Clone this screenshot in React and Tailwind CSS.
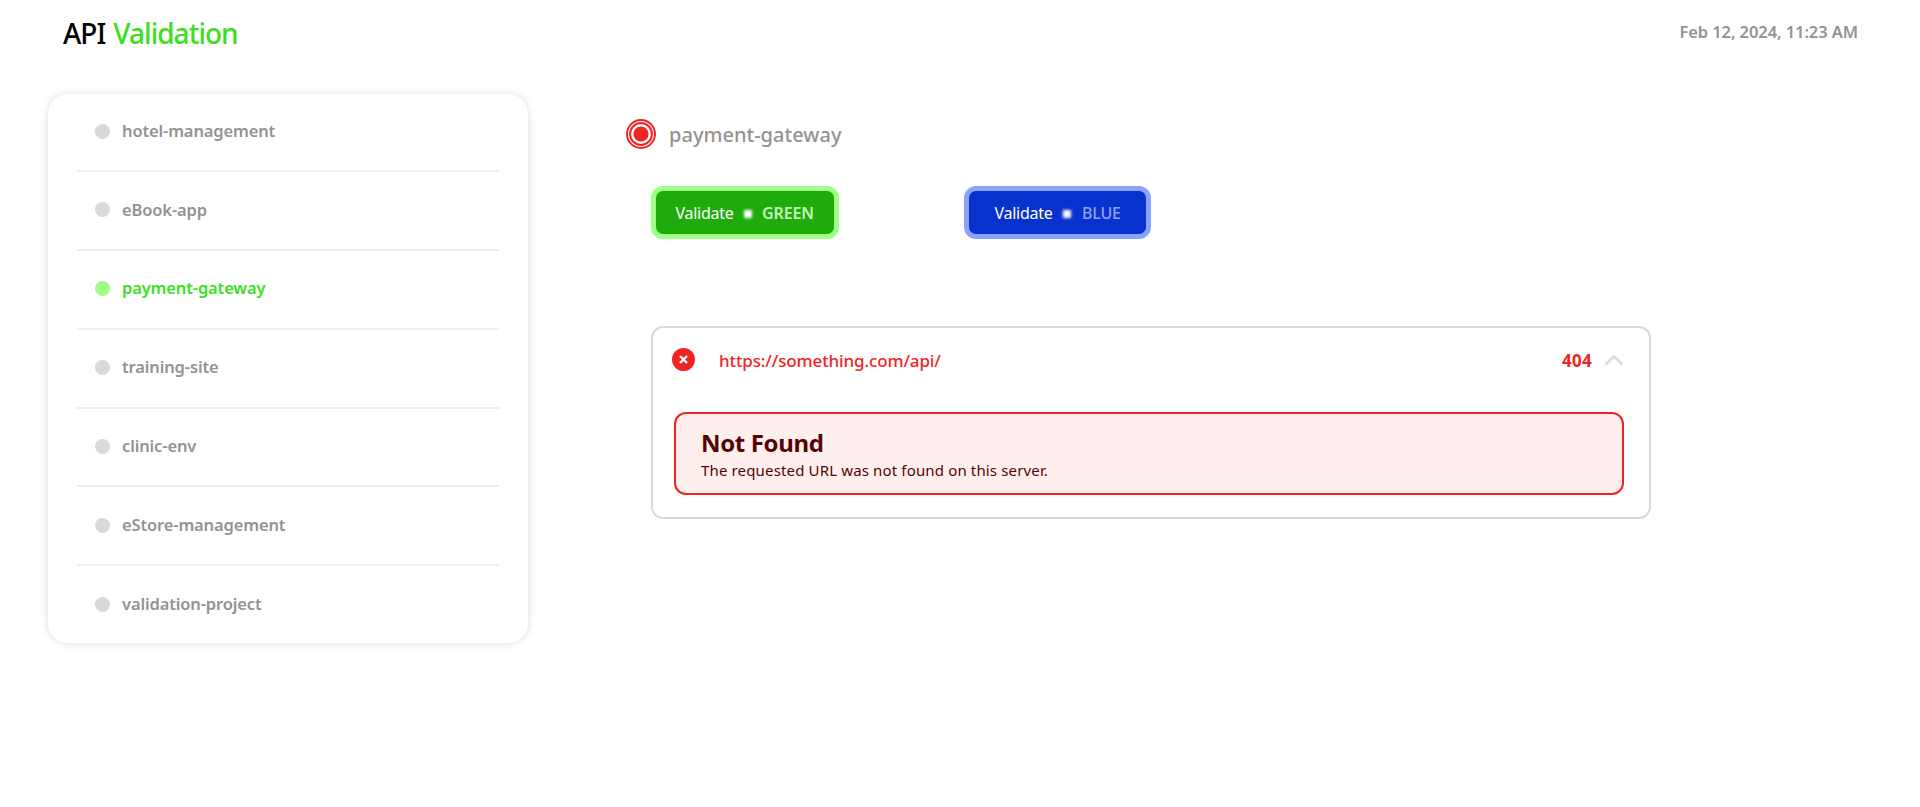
const projects = [
  "hotel-management",
  "eBook-app",
  "payment-gateway",
  "training-site",
  "clinic-env",
  "eStore-management",
  "validation-project",
];

const selected = "payment-gateway";

function ProjectItem({ name }) {
  const active = name === selected;
  return (
    <li className="flex h-[78.85px] items-center gap-3 border-t-2 border-[#eeeeee] pb-px pl-[18px] first:h-[76px] first:border-t-0">
      <span className={`size-[15px] rounded-full ${active ? "bg-[#9dff85]" : "bg-[#d9d9d9]"}`} />
      <span
        className={`text-[16.5px] font-semibold tracking-[-0.14px] ${active ? "text-[#3be01d]" : "text-[#959292]"}`}
      >
        {name}
      </span>
    </li>
  );
}

function StatusRings() {
  return (
    <svg className="size-[30px]" viewBox="0 0 30 30" fill="none">
      <circle cx="15" cy="15" r="14" stroke="#f12424" strokeWidth="2" />
      <circle cx="15" cy="15" r="10.9" stroke="#f12424" strokeWidth="2" />
      <circle cx="15" cy="15" r="7.6" fill="#f12424" />
    </svg>
  );
}

function ErrorIcon() {
  return (
    <svg className="mb-[2px] size-[23px]" viewBox="0 0 23 23" fill="none">
      <circle cx="11.5" cy="11.5" r="11.5" fill="#f12424" />
      <path d="M8.8 8.8l5.4 5.4M14.2 8.8l-5.4 5.4" stroke="#fff" strokeWidth="2.3" strokeLinecap="square" />
    </svg>
  );
}

function GlowDot() {
  return <span className="mt-[3px] size-2 bg-white blur-[1.8px]" />;
}

export default function App() {
  return (
    <div className="min-h-[807px] bg-white font-['Noto_Sans',sans-serif]">
      <header className="flex h-16 items-center justify-between pt-px pr-[62px] pl-[63px]">
        <h1 className="flex gap-2 pt-px text-[28px] font-medium whitespace-nowrap text-black">
          <span className="tracking-[-1px]">API</span>
          <span className="tracking-[-0.98px] text-[#3be01d]">Validation</span>
        </h1>
        <time className="text-[16.5px] font-semibold tracking-[-0.09px] text-[#959292]">
          Feb 12, 2024, 11:23 AM
        </time>
      </header>

      <main className="flex items-start pt-[30px] pl-12">
        <ul className="h-[549px] w-[480px] rounded-[20px] bg-white px-[29px] shadow-[0_0_8px_rgba(0,0,0,0.14)]">
          {projects.map((name) => (
            <ProjectItem key={name} name={name} />
          ))}
        </ul>

        <section className="ml-[98px] pt-[25px]">
          <div className="flex h-[30px] items-center gap-[13px]">
            <StatusRings />
            <h2 className="pt-px text-[20px] font-medium tracking-[0.02px] text-[#959292]">
              payment-gateway
            </h2>
          </div>

          <div className="ml-[25px] w-[1000px]">
            <div className="mt-[37px] flex gap-[125px]">
              <button className="flex h-[53px] w-[188px] items-center rounded-xl border-[5px] border-[#9dff85] bg-[#1fab0b] pl-[19px] text-base text-white">
                <span className="w-[59px] tracking-[-0.25px] whitespace-nowrap">Validate</span>
                <span className="ml-[10px] flex w-[18px]">
                  <GlowDot />
                </span>
                <span className="font-semibold tracking-[-0.1px] text-[#c4f7b9]">GREEN</span>
              </button>
              <button className="flex h-[53px] w-[187px] items-center rounded-xl border-[5px] border-[#8ba3ff] bg-[#0732cd] pl-[25px] text-base text-white">
                <span className="w-[59px] tracking-[-0.25px] whitespace-nowrap">Validate</span>
                <span className="ml-[10px] flex w-[19px]">
                  <GlowDot />
                </span>
                <span className="font-medium tracking-[-0.2px] text-[#8ba3ff]">BLUE</span>
              </button>
            </div>

            <article className="mt-[87px] h-[193px] rounded-xl border-2 border-[#d9d9d9]">
              <div className="flex h-16 items-center pr-[26px] pl-[19px] text-[17px] text-[#f12424]">
                <ErrorIcon />
                <span className="ml-6 pt-px font-medium tracking-[-0.13px]">
                  https://something.com/api/
                </span>
                <span className="ml-auto pt-px font-bold tracking-[0.3px]">404</span>
                <svg className="ml-[13px] h-[10px] w-[18px]" viewBox="0 0 18 10" fill="none">
                  <path
                    d="M1.3 8.7L9 1.4l7.7 7.3"
                    stroke="#d9d9d9"
                    strokeWidth="2.6"
                    strokeLinecap="round"
                    strokeLinejoin="round"
                  />
                </svg>
              </div>
              <div className="mt-5 mr-[25px] ml-[21px] h-[83px] rounded-xl border-2 border-[#f12424] bg-[#feefee] pt-[14px] pl-[25px] text-[#550404]">
                <h3 className="text-[24px] leading-[30px] font-bold tracking-[-0.35px]">Not Found</h3>
                <p className="text-[15px] leading-6 tracking-[0.15px]">
                  The requested URL was not found on this server.
                </p>
              </div>
            </article>
          </div>
        </section>
      </main>
    </div>
  );
}
